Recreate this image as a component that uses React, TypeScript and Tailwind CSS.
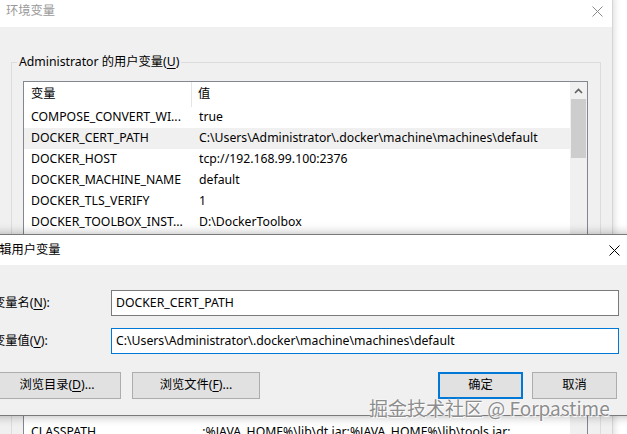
import React from 'react';

const userVars: [string, string][] = [
  ['COMPOSE_CONVERT_WI...', 'true'],
  ['DOCKER_CERT_PATH', 'C:\\Users\\Administrator\\.docker\\machine\\machines\\default'],
  ['DOCKER_HOST', 'tcp://192.168.99.100:2376'],
  ['DOCKER_MACHINE_NAME', 'default'],
  ['DOCKER_TLS_VERIFY', '1'],
  ['DOCKER_TOOLBOX_INST...', 'D:\\DockerToolbox'],
  ['OneDrive', 'C:\\Users\\Administrator\\OneDrive'],
  ['Path', 'C:\\Users\\Administrator\\AppData\\Local\\Microsoft\\WindowsApps;'],
  ['TEMP', 'C:\\Users\\Administrator\\AppData\\Local\\Temp'],
  ['TMP', 'C:\\Users\\Administrator\\AppData\\Local\\Temp'],
  ['', ''],
  ['', ''],
  ['', ''],
  ['', ''],
  ['', ''],
  ['CLASSPATH', '.;%JAVA_HOME%\\lib\\dt.jar;%JAVA_HOME%\\lib\\tools.jar;'],
];

function Mn({ children }: { children: React.ReactNode }) {
  return <span className="underline underline-offset-2">{children}</span>;
}

function CloseIcon({ className }: { className?: string }) {
  return (
    <svg width="11" height="11" viewBox="0 0 11 11" className={className}>
      <path d="M0.5 0.5 L10.5 10.5 M10.5 0.5 L0.5 10.5" stroke="currentColor" strokeWidth="1" fill="none" />
    </svg>
  );
}

function VarList() {
  return (
    <div className="flex h-[400px] border border-[#828790] bg-white">
      <div className="flex-1">
        <div className="flex h-[25px] items-center">
          <div className="flex h-full w-[168px] items-center border-r border-[#e5e5e5] pl-[7px]">变量</div>
          <div className="pl-[6px]">值</div>
        </div>
        {userVars.map(([name, value], i) => (
          <div key={i} className={`flex h-[21px] items-center ${i === 1 ? 'bg-[#f0f0f0]' : ''}`}>
            <div className="w-[168px] shrink-0 whitespace-nowrap pl-[7px]">{name}</div>
            <div className="whitespace-nowrap pl-[7px]">{value}</div>
          </div>
        ))}
      </div>
      <div className="flex w-[17px] flex-col bg-[#f0f0f0]">
        <div className="flex h-[17px] items-center justify-center text-[#606060]">
          <svg width="9" height="6" viewBox="0 0 9 6">
            <path d="M1 5 L4.5 1.5 L8 5" stroke="currentColor" strokeWidth="1.6" fill="none" />
          </svg>
        </div>
        <div className="mx-[1px] h-[59px] bg-[#cdcdcd]" />
      </div>
    </div>
  );
}

export default function App() {
  return (
    <div className="relative h-[434px] w-[627px] overflow-hidden bg-white font-['Noto_Sans','Noto_Sans_CJK_SC',sans-serif] text-[12.25px] text-black">
      {/* background window: 环境变量 */}
      <div className="absolute left-[-2px] top-[-4px] flex h-[470px] w-[615px] flex-col border-r border-[#d5d5d5] shadow-[2px_0_6px_rgba(0,0,0,0.12)]">
        <div className="flex h-[31px] shrink-0 items-center justify-between bg-white pl-2 pr-[9px]">
          <span className="text-[#999999]">环境变量</span>
          <CloseIcon className="text-[#8a8a8a]" />
        </div>
        <div className="flex-1 bg-[#f0f0f0] pl-[13px] pr-[11px]">
          <fieldset className="mt-[27px] border border-[#dcdcdc] pb-3 pl-[11px] pr-[12px] pt-[11px]">
            <legend className="ml-[-6px] px-[2px] leading-[16px]">
              Administrator 的用户变量(<Mn>U</Mn>)
            </legend>
            <VarList />
          </fieldset>
        </div>
      </div>

      {/* dialog: 编辑用户变量 */}
      <div className="absolute left-[-22px] top-[234px] w-[660px] border border-[#7a7a7a] shadow-[0_0_10px_rgba(0,0,0,0.3)]">
        <div className="flex h-[30px] items-center justify-between bg-white pl-2 pr-[17px]">
          <span>编辑用户变量</span>
          <CloseIcon className="text-black" />
        </div>
        <div className="bg-[#f0f0f0] pb-[16px] pl-[14px] pr-[18px] pt-[25px]">
          <div className="grid grid-cols-[118px_1fr] items-center gap-y-[12px]">
            <div>变量名(<Mn>N</Mn>):</div>
            <div className="flex h-[26px] items-center border border-[#7a7a7a] bg-white pl-[4px]">DOCKER_CERT_PATH</div>
            <div>变量值(<Mn>V</Mn>):</div>
            <div className="flex h-[26px] items-center border border-[#0078d7] bg-white pl-[4px]">
              C:\Users\Administrator\.docker\machine\machines\default
            </div>
          </div>
          <div className="mt-[18px] flex items-center">
            <button className="h-[27px] w-[128px] border border-[#adadad] bg-[#e1e1e1]">
              浏览目录(<Mn>D</Mn>)...
            </button>
            <button className="ml-[11px] h-[27px] w-[128px] border border-[#adadad] bg-[#e1e1e1]">
              浏览文件(<Mn>F</Mn>)...
            </button>
            <div className="flex-1" />
            <button className="h-[27px] w-[85px] border-2 border-[#0078d7] bg-[#e1e1e1]">确定</button>
            <button className="ml-[9px] mr-[2px] h-[27px] w-[85px] border border-[#adadad] bg-[#e1e1e1]">取消</button>
          </div>
        </div>
      </div>

      {/* watermark */}
      <div className="pointer-events-none absolute left-[369px] top-[396px] whitespace-nowrap font-['Noto_Sans_CJK_SC',sans-serif] text-[19px] leading-[24px] text-[#8d8d8d] [text-shadow:0_0_1px_#fff,0_0_2px_#fff,1px_1px_1px_#fff]">
        掘金技术社区 @ Forpastime
      </div>
    </div>
  );
}
